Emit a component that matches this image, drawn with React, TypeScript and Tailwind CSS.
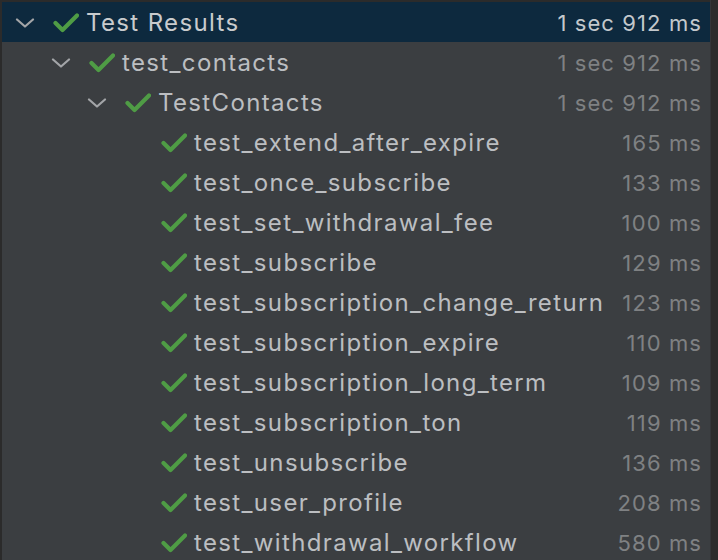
import React from "react";

type Row = {
  name: string;
  time: string;
  level: number;
  expandable?: boolean;
  selected?: boolean;
};

const rows: Row[] = [
  { name: "Test Results", time: "1 sec 912 ms", level: 0, expandable: true, selected: true },
  { name: "test_contacts", time: "1 sec 912 ms", level: 1, expandable: true },
  { name: "TestContacts", time: "1 sec 912 ms", level: 2, expandable: true },
  { name: "test_extend_after_expire", time: "165 ms", level: 3 },
  { name: "test_once_subscribe", time: "133 ms", level: 3 },
  { name: "test_set_withdrawal_fee", time: "100 ms", level: 3 },
  { name: "test_subscribe", time: "129 ms", level: 3 },
  { name: "test_subscription_change_return", time: "123 ms", level: 3 },
  { name: "test_subscription_expire", time: "110 ms", level: 3 },
  { name: "test_subscription_long_term", time: "109 ms", level: 3 },
  { name: "test_subscription_ton", time: "119 ms", level: 3 },
  { name: "test_unsubscribe", time: "136 ms", level: 3 },
  { name: "test_user_profile", time: "208 ms", level: 3 },
  { name: "test_withdrawal_workflow", time: "580 ms", level: 3 },
];

const indents = ["pl-[13px]", "pl-[49px]", "pl-[85px]", "pl-[121px]"];

function Chevron() {
  return (
    <svg width="20" height="10" viewBox="0 0 20 10" className="shrink-0">
      <polyline
        points="2,1.5 10,8.5 18,1.5"
        fill="none"
        stroke="#a3a5a8"
        strokeWidth="2.2"
        strokeLinecap="round"
        strokeLinejoin="round"
      />
    </svg>
  );
}

function Check() {
  return (
    <svg width="26" height="20" viewBox="0 0 26 20" className="shrink-0">
      <polyline
        points="2.5,10 9.5,17 24,2.5"
        fill="none"
        stroke="#4f9c45"
        strokeWidth="4.2"
        strokeLinecap="round"
        strokeLinejoin="round"
      />
    </svg>
  );
}

function TreeRow({ row }: { row: Row }) {
  return (
    <div
      className={`flex items-center h-10 pt-[2px] pr-[8px] ${indents[row.level]} ${
        row.selected ? "bg-[#0d293e]" : ""
      }`}
    >
      {row.expandable ? <Chevron /> : <div className="w-5 shrink-0" />}
      <div className="ml-[18px]">
        <Check />
      </div>
      <span
        className={`ml-[7px] text-[24px] tracking-[1.35px] whitespace-nowrap ${
          row.selected ? "text-[#c9cbcd]" : "text-[#bcbec1]"
        }`}
      >
        {row.name}
      </span>
      <span
        className={`ml-auto text-[22px] tracking-[1.1px] whitespace-nowrap ${
          row.selected ? "text-[#c3c8cc]" : "text-[#7f8183]"
        }`}
      >
        {row.time}
      </span>
    </div>
  );
}

export default function App() {
  return (
    <div
      className="w-[718px] h-[560px] overflow-hidden bg-[#2b2b2b] flex"
      style={{ fontFamily: "Inter, 'Noto Sans', sans-serif" }}
    >
      <div className="flex-1 mt-[2px] ml-[2px] bg-[#3b3e41] overflow-hidden">
        {rows.map((r) => (
          <TreeRow key={r.name} row={r} />
        ))}
      </div>
      <div className="w-[8px] border-l border-[#333538] bg-[#2b2b2b]" />
    </div>
  );
}
